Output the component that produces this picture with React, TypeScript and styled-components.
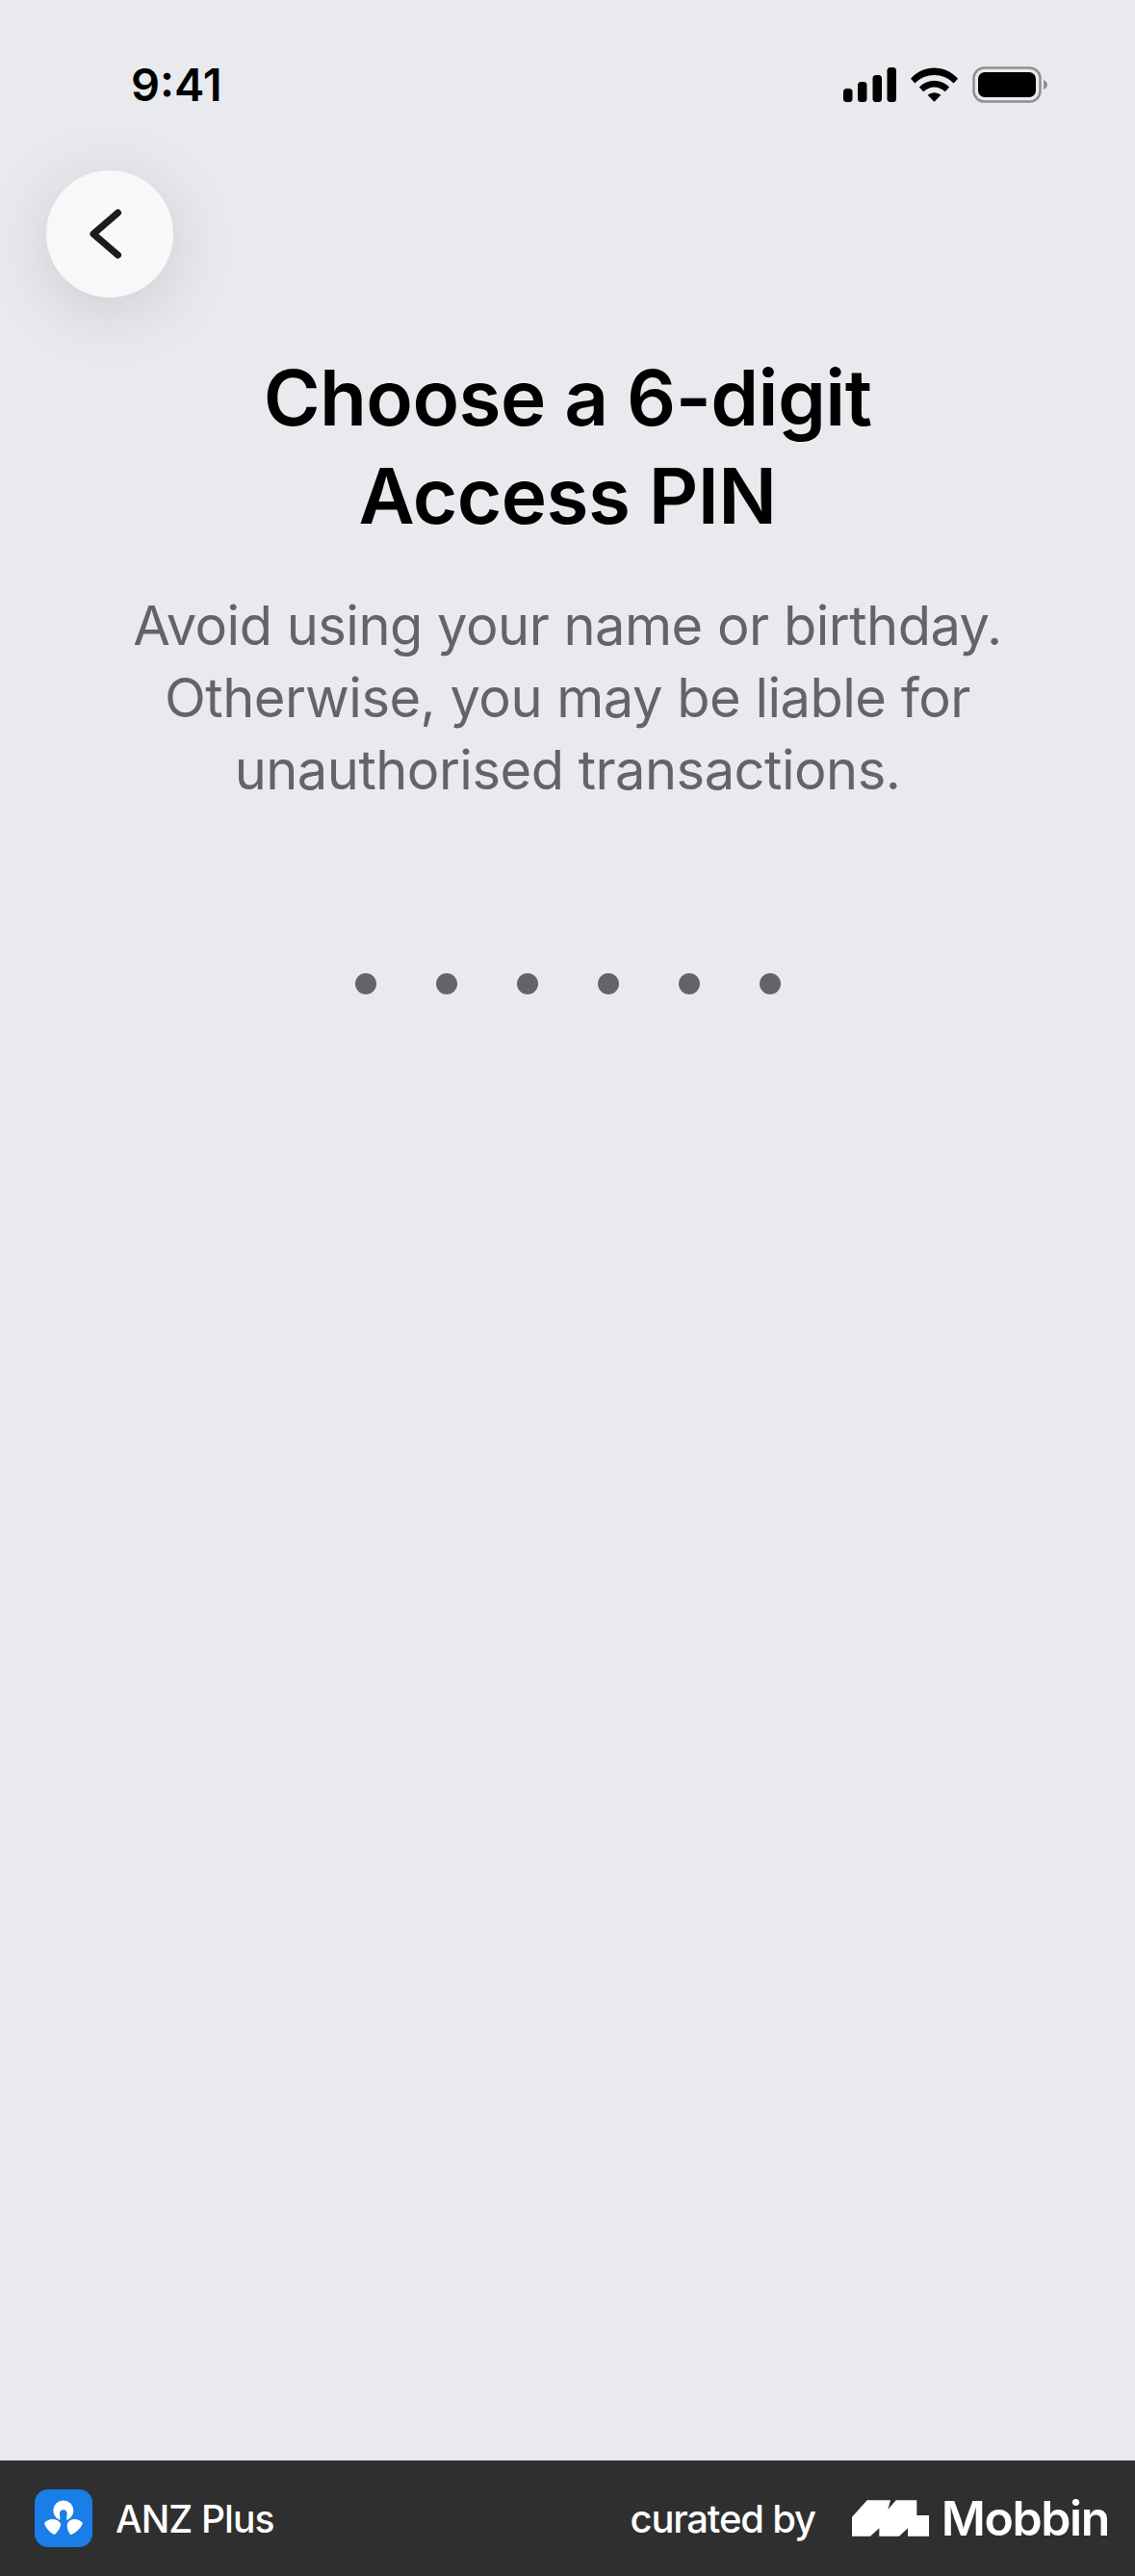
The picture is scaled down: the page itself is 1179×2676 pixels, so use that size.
import React from "react";
import styled, { createGlobalStyle } from "styled-components";

const Global = createGlobalStyle`
  html, body { margin: 0; padding: 0; background: #e9eaee; }
  #root { width: 1179px; height: 2676px; }
  * { box-sizing: border-box; }
`;

const Page = styled.div`
  width: 1179px;
  height: 2676px;
  display: flex;
  flex-direction: column;
  background: #e9eaee;
  font-family: Inter, "Liberation Sans", sans-serif;
  overflow: hidden;
`;

const Screen = styled.main`
  flex: 1;
  display: flex;
  flex-direction: column;
`;

const StatusBar = styled.header`
  height: 177px;
  padding: 60px 91px 0 136px;
  display: flex;
  justify-content: space-between;
  align-items: flex-start;
`;

const Time = styled.span`
  font-size: 47px;
  line-height: 56px;
  font-weight: 600;
  color: #000;
`;

const StatusIcons = styled.div`
  display: flex;
  align-items: center;
  gap: 15px;
  padding-top: 9px;
`;

const BackRow = styled.div`
  padding-left: 48px;
`;

const BackButton = styled.button`
  width: 132px;
  height: 132px;
  border: 0;
  padding: 0 8px 0 0;
  border-radius: 50%;
  background: #f8f8f9;
  box-shadow: 0 12px 64px rgba(90, 95, 110, 0.22);
  display: flex;
  align-items: center;
  justify-content: center;
`;

const Title = styled.h1`
  margin: 53px 0 0;
  text-align: center;
  font-size: 80px;
  line-height: 102px;
  font-weight: 600;
  letter-spacing: -0.6px;
  color: #000;
`;

const Body = styled.p`
  margin: 47px 0 0;
  text-align: center;
  font-size: 56px;
  line-height: 75px;
  font-weight: 400;
  letter-spacing: -0.5px;
  color: #63646b;
`;

const Dots = styled.div`
  margin-top: 173px;
  display: flex;
  justify-content: center;
  gap: 62px;
`;

const Dot = styled.span`
  width: 22px;
  height: 22px;
  border-radius: 50%;
  background: #63646b;
`;

const Footer = styled.footer`
  height: 120px;
  background: #2f2f2f;
  color: #fff;
  display: flex;
  align-items: center;
  justify-content: space-between;
  padding: 0 27px 0 36px;
`;

const Brand = styled.div`
  display: flex;
  align-items: center;
  gap: 24px;
`;

const BrandName = styled.span`
  font-size: 39px;
  font-weight: 500;
  letter-spacing: -0.9px;
`;

const Curated = styled.div`
  display: flex;
  align-items: center;
  gap: 38px;
`;

const CuratedText = styled.span`
  font-size: 40px;
  font-weight: 500;
  letter-spacing: -1.2px;
`;

const MobbinLogo = styled.div`
  display: flex;
  align-items: center;
  gap: 13px;
`;

const MobbinName = styled.span`
  font-size: 50px;
  font-weight: 600;
  letter-spacing: -1.4px;
`;

const Signal = () => (
  <svg width="55" height="36" viewBox="0 0 55 36" fill="#000">
    <rect x="0" y="22" width="9.500" height="14" rx="3.500" />
    <rect x="15" y="15" width="9.500" height="21" rx="3.500" />
    <rect x="30.500" y="8" width="9.500" height="28" rx="3.500" />
    <rect x="45.500" y="0" width="9.500" height="36" rx="3.500" />
  </svg>
);

const Wifi = () => (
  <svg width="49" height="36" viewBox="0 0 50 36" fill="#000">
    <path d="M0 11.500 C14 -3.500 36 -3.500 50 11.500 L45.500 16.500 C34 5 16 5 4.500 16.500 Z" />
    <path d="M9 20.500 C18 11.500 32 11.500 41 20.500 L36.500 25.500 C29.500 19 20.500 19 13.500 25.500 Z" />
    <path d="M18 29 C22 25.500 28 25.500 32 29 L25 36 Z" />
  </svg>
);

const Battery = () => (
  <svg width="78" height="38" viewBox="0 0 78 38">
    <rect x="1.500" y="1.500" width="69" height="35" rx="11" fill="none" stroke="#8e8e90" strokeWidth="2.500" />
    <rect x="6" y="6" width="60" height="26" rx="7" fill="#000" />
    <path d="M74 14 C76.500 15 78 17 78 19 C78 21 76.500 23 74 24 Z" fill="#8e8e90" />
  </svg>
);

const Chevron = () => (
  <svg width="34" height="56" viewBox="0 0 34 56" fill="none">
    <path d="M29.500 6 L4 28 L29.500 50" stroke="#1c1c1e" strokeWidth="7" strokeLinecap="round" strokeLinejoin="round" />
  </svg>
);

const AnzIcon = () => (
  <svg width="60" height="60" viewBox="0 0 60 60">
    <rect width="60" height="60" rx="14" fill="#1a7de8" />
    <circle cx="29.800" cy="22" r="10.500" fill="#fff" />
    <circle cx="29.800" cy="25" r="3.800" fill="#1a7de8" />
    <rect x="26.300" y="25" width="7" height="9" fill="#1a7de8" />
    <path d="M10 35 C13 30.500 23 28.500 27 35.500 C27.500 39 24 44 20.700 47 C16 45 12 41 10 35 Z" fill="#fff" />
    <path d="M50 35 C47 30.500 37 28.500 34 35.500 C33 39 34.500 44 37.500 47.300 C43 45 47.500 41 50 35 Z" fill="#fff" />
  </svg>
);

const MobbinMark = () => (
  <svg width="80" height="38" viewBox="0 0 80 37.300" fill="#fff">
    <path d="M0 17.300 L15.700 0 L40 0 L37.300 9.700 L45.700 0 L67.300 0 L67.300 15.700 L80 15.700 L80 37.300 L58 37.300 L58 29 L49 37.300 L28.300 37.300 L28.300 29 L19 37.300 L0 37.300 Z" />
  </svg>
);

export default function App() {
  return (
    <Page>
      <Global />
      <Screen>
        <StatusBar>
          <Time>9:41</Time>
          <StatusIcons>
            <Signal />
            <Wifi />
            <Battery />
          </StatusIcons>
        </StatusBar>
        <BackRow>
          <BackButton aria-label="Back">
            <Chevron />
          </BackButton>
        </BackRow>
        <Title>
          Choose a 6-digit
          <br />
          Access PIN
        </Title>
        <Body>
          Avoid using your name or birthday.
          <br />
          Otherwise, you may be liable for
          <br />
          unauthorised transactions.
        </Body>
        <Dots>
          {[0, 1, 2, 3, 4, 5].map((i) => (
            <Dot key={i} />
          ))}
        </Dots>
      </Screen>
      <Footer>
        <Brand>
          <AnzIcon />
          <BrandName>ANZ Plus</BrandName>
        </Brand>
        <Curated>
          <CuratedText>curated by</CuratedText>
          <MobbinLogo>
            <MobbinMark />
            <MobbinName>Mobbin</MobbinName>
          </MobbinLogo>
        </Curated>
      </Footer>
    </Page>
  );
}
